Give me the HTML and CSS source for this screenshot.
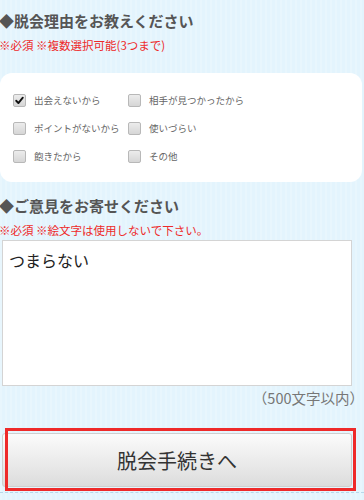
FILE: index.html
```html
<!DOCTYPE html>
<html lang="ja">
<head>
<meta charset="utf-8">
<link rel="stylesheet" href="styles.css">
</head>
<body>
<div class="page">
  <h2 class="title">◆脱会理由をお教えください</h2>
  <p class="note">※必須 ※複数選択可能(3つまで)</p>
  <div class="panel">
    <div class="grid">
      <label class="opt"><span class="cb checked"><svg viewBox="0 0 13 13" width="13" height="13"><path d="M2.6 6.8 L5.2 9.6 L10.4 3.2" fill="none" stroke="#111" stroke-width="2.2" stroke-linecap="round" stroke-linejoin="round"/></svg></span><span class="lbl">出会えないから</span></label>
      <label class="opt"><span class="cb"></span><span class="lbl">相手が見つかったから</span></label>
      <label class="opt"><span class="cb"></span><span class="lbl">ポイントがないから</span></label>
      <label class="opt"><span class="cb"></span><span class="lbl">使いづらい</span></label>
      <label class="opt"><span class="cb"></span><span class="lbl">飽きたから</span></label>
      <label class="opt"><span class="cb"></span><span class="lbl">その他</span></label>
    </div>
  </div>
  <h2 class="title title2">◆ご意見をお寄せください</h2>
  <p class="note">※必須 ※絵文字は使用しないで下さい。</p>
  <div class="textarea">つまらない</div>
  <p class="count">（500文字以内）</p>
  <div class="btnwrap">
    <div class="btn">脱会手続きへ</div>
  </div>
  <div class="dash"></div>
</div>
</body>
</html>
```
FILE: styles.css
```css
html, body {
  margin: 0;
  padding: 0;
}
body {
  width: 364px;
  height: 500px;
  overflow: hidden;
  background-color: #e3f4fd;
  background-image: repeating-linear-gradient(90deg, rgba(255,255,255,0.18) 0 2px, rgba(255,255,255,0) 2px 5px);
  font-family: "Noto Sans CJK JP", "Noto Sans", sans-serif;
}
.page {
  display: flex;
  flex-direction: column;
}
.title {
  margin: 10px 0 0 -1px;
  font-size: 15px;
  line-height: 22px;
  font-weight: bold;
  color: #555;
}
.title2 {
  margin-top: 13px;
}
.note {
  margin: 5px 0 0 -1px;
  font-size: 11.5px;
  line-height: 16px;
  color: #ee2a2a;
}
.panel {
  margin: 20px 2px 0 0;
  background: #fff;
  border-radius: 12px;
  padding: 13px 0 12px 13px;
}
.grid {
  display: grid;
  grid-template-columns: 115px 1fr;
}
.opt {
  display: flex;
  align-items: center;
  height: 28px;
  gap: 8px;
}
.cb {
  width: 11px;
  height: 11px;
  border: 1px solid #b8b8b8;
  border-radius: 2px;
  background: linear-gradient(#ececec, #d6d6d6);
  display: flex;
  align-items: center;
  justify-content: center;
  flex: none;
}
.cb svg {
  width: 11px;
  height: 11px;
}
.lbl {
  font-size: 9.5px;
  color: #666;
}
.textarea {
  margin: 2px 12px 0 2px;
  height: 136px;
  background: #fff;
  border: 1px solid #d4d4d4;
  padding: 6px 6px 2px 6px;
  font-size: 16px;
  line-height: 26px;
  color: #222;
}
.count {
  margin: 1px 0 0 0;
  text-align: right;
  font-size: 14.5px;
  line-height: 21px;
  color: #777;
}
.btnwrap {
  position: relative;
  margin: 20px 12px 0 2px;
  padding-top: 5px;
  padding-bottom: 4px;
}
.btnwrap::after {
  content: "";
  position: absolute;
  left: 3px;
  right: -4px;
  top: 0;
  bottom: 0;
  border: 3px solid #ee2a2a;
}
.btn {
  height: 52px;
  border: 1px solid #cfcfcf;
  border-radius: 3px;
  background: linear-gradient(#fbfbfb, #e9e9e9 60%, #dcdcdc);
  display: flex;
  align-items: center;
  justify-content: center;
  font-size: 20px;
  color: #333;
}
.dash {
  margin-top: 1px;
  border-top: 1px dashed #b8d8ea;
}
```
